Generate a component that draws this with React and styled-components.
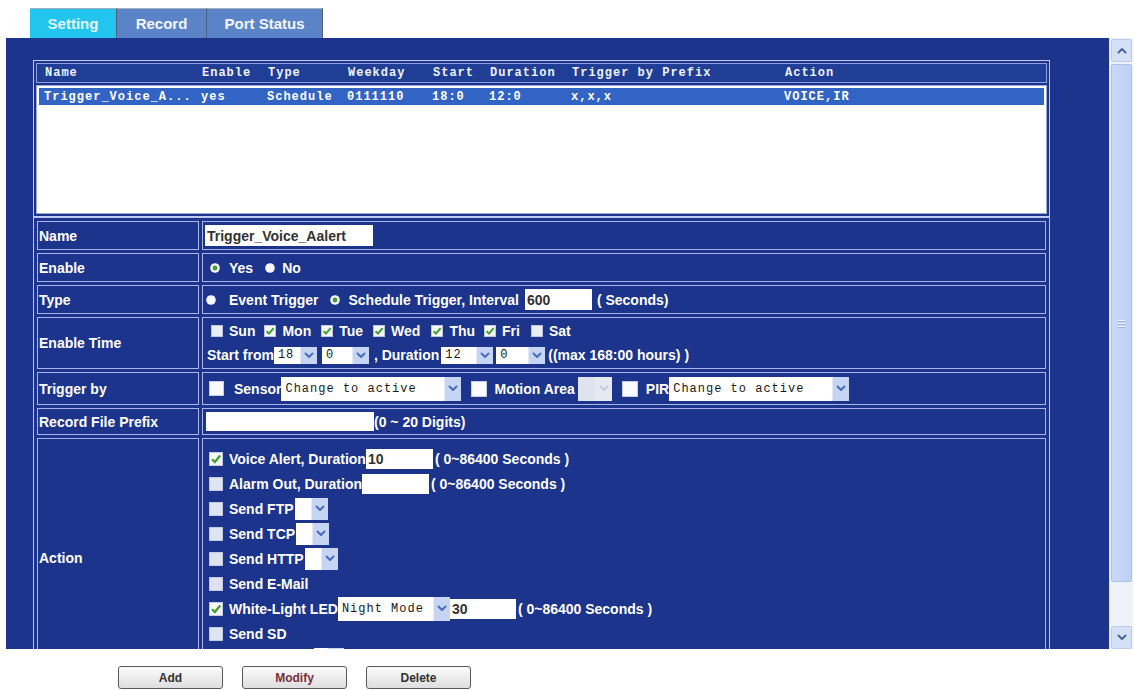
import React from "react";
import styled, { createGlobalStyle } from "styled-components";

const GlobalStyle = createGlobalStyle`
  html, body {
    margin: 0;
    padding: 0;
    background: #ffffff;
  }
  body {
    font-family: "Liberation Sans", Arial, sans-serif;
  }
`;

const Page = styled.div`
  width: 1134px;
  height: 690px;
  overflow: hidden;
  background: #ffffff;
`;

const TabBar = styled.div`
  display: flex;
  height: 30px;
  padding: 8px 0 0 30px;
`;

const Tab = styled.div`
  box-sizing: border-box;
  width: ${(p) => p.$w}px;
  display: flex;
  align-items: center;
  justify-content: center;
  background: ${(p) => (p.$active ? "#22c5ee" : "#5b84c8")};
  color: ${(p) => (p.$active ? "#e2f6ff" : "#f2f6ff")};
  font: bold 15px "Liberation Sans", Arial, sans-serif;
  border-top: 1px solid #a4aebe;
  border-right: 1px solid #4f5f7c;
`;

const Frame = styled.div`
  display: flex;
  margin-left: 6px;
  width: 1127px;
  height: 611px;
`;

const Viewport = styled.div`
  box-sizing: border-box;
  flex: 1;
  background: #1c348c;
  overflow: hidden;
  padding: 22px 0 0 27px;
`;

const Content = styled.div`
  width: 1017px;
`;

/* ---------- rule list ---------- */

const ListFrame = styled.div`
  border: 1px solid #c2ccf2;
  padding: 2px;
`;

const listColumns = "157px 66px 80px 85px 57px 82px 213px 1fr";

const ListHead = styled.div`
  box-sizing: border-box;
  display: grid;
  grid-template-columns: ${listColumns};
  align-items: center;
  height: 20px;
  padding-left: 8px;
  background: #213e96;
  border: 1px solid #8ea0dc;
  font: bold 12px "Liberation Mono", monospace;
  letter-spacing: 1px;
  color: #eef2ff;
  white-space: nowrap;
`;

const ListBox = styled.div`
  box-sizing: border-box;
  margin-top: 2px;
  height: 129px;
  background: #ffffff;
  border: 1px solid #9aaade;
  padding: 2px;
`;

const ListRow = styled.div`
  display: grid;
  grid-template-columns: ${listColumns};
  align-items: center;
  height: 17px;
  padding-left: 5px;
  background: ${(p) => (p.$selected ? "#3264c6" : "transparent")};
  color: ${(p) => (p.$selected ? "#ffffff" : "#222222")};
  font: bold 12px "Liberation Mono", monospace;
  letter-spacing: 1px;
  white-space: nowrap;
`;

/* ---------- form table ---------- */

const FormTable = styled.table`
  width: 1017px;
  margin-top: 0;
  border: 1px solid #b8c4f0;
  border-collapse: separate;
  border-spacing: 3px;
`;

const LabelCell = styled.td`
  box-sizing: border-box;
  width: 162px;
  height: ${(p) => p.$h}px;
  padding: 0 0 0 1px;
  border: 1px solid #aab6e8;
  color: #ffffff;
  font: bold 14px "Liberation Sans", Arial, sans-serif;
  vertical-align: middle;
`;

const ValueCell = styled.td`
  box-sizing: border-box;
  height: ${(p) => p.$h}px;
  padding: ${(p) => (p.$top ? "7px 0 0 1px" : "0 0 0 1px")};
  border: 1px solid #aab6e8;
  color: #ffffff;
  font: bold 14px "Liberation Sans", Arial, sans-serif;
  vertical-align: ${(p) => (p.$top ? "top" : "middle")};
`;

const Line = styled.div`
  display: flex;
  align-items: center;
  height: ${(p) => p.$h || 17}px;
  margin-top: ${(p) => p.$mt || 0}px;
  white-space: nowrap;
`;

const Text = styled.span`
  margin-left: ${(p) => p.$ml || 0}px;
  flex-shrink: 0;
`;

const TextInput = styled.input`
  box-sizing: border-box;
  width: ${(p) => p.$w}px;
  height: ${(p) => p.$h || 20}px;
  margin-left: ${(p) => p.$ml || 0}px;
  padding: 0 2px;
  border: none;
  background: #ffffff;
  color: #333333;
  font: bold 14px "Liberation Sans", Arial, sans-serif;
  flex-shrink: 0;
  outline: none;
`;

const SelectBox = styled.div`
  box-sizing: border-box;
  display: flex;
  width: ${(p) => p.$w}px;
  height: ${(p) => p.$h || 17}px;
  margin-left: ${(p) => p.$ml || 0}px;
  background: ${(p) => (p.$disabled ? "#dfe3ee" : "#ffffff")};
  flex-shrink: 0;
`;

const SelectText = styled.span`
  flex: 1;
  display: flex;
  align-items: center;
  padding-left: 4px;
  overflow: hidden;
  color: #1a1a1a;
  font: 12px "Liberation Mono", monospace;
  letter-spacing: 1px;
  white-space: nowrap;
`;

const SelectArrow = styled.span`
  width: 16px;
  display: flex;
  align-items: center;
  justify-content: center;
  background: ${(p) => (p.$disabled ? "#e6e9f1" : "#c5d5f3")};
  border-left: 1px solid #e4eaf8;
`;

const Chevron = ({ dir = "down", color = "#4a6cc0" }) => (
  <svg width="10" height="7" viewBox="0 0 10 7">
    <path
      d={dir === "down" ? "M1.5 1.5 L5 5 L8.5 1.5" : "M1.5 5.5 L5 2 L8.5 5.5"}
      fill="none"
      stroke={color}
      strokeWidth="2"
      strokeLinecap="round"
      strokeLinejoin="round"
    />
  </svg>
);

const Select = ({ w, h, ml, value = "", disabled }) => (
  <SelectBox $w={w} $h={h} $ml={ml} $disabled={disabled}>
    <SelectText>{value}</SelectText>
    <SelectArrow $disabled={disabled}>
      <Chevron color={disabled ? "#c4cbe0" : "#4a6cc0"} />
    </SelectArrow>
  </SelectBox>
);

const Box = styled.svg`
  flex-shrink: 0;
  width: ${(p) => p.$size}px;
  height: ${(p) => p.$size}px;
  margin-left: ${(p) => p.$ml || 0}px;
`;

const Check = ({ on, size = 12, ml, tone = "#e9edf5" }) => (
  <Box $size={size} $ml={ml} viewBox="0 0 12 12">
    <rect x="0.4" y="0.4" width="11.2" height="11.2" fill={on ? "#f6f8fb" : tone} stroke="#c6cee0" strokeWidth="0.8" />
    {on && (
      <path d="M2.6 6.2 L5 8.6 L9.6 3.1" fill="none" stroke="#3f9f2f" strokeWidth="2" />
    )}
  </Box>
);

const Radio = ({ on, ml }) => (
  <Box $size={10} $ml={ml} viewBox="0 0 10 10">
    <circle cx="5" cy="5" r="4.8" fill="#f4f6fb" />
    {on && <circle cx="5" cy="5" r="2.4" fill="#3fa03a" />}
  </Box>
);

/* ---------- scrollbar ---------- */

const ScrollBar = styled.div`
  box-sizing: border-box;
  width: 24px;
  display: flex;
  flex-direction: column;
  background: #eef2f9;
  border-left: 1px solid #dde4f2;
  padding: 0 1px;
`;

const ScrollButton = styled.div`
  height: 21px;
  margin-top: ${(p) => p.$mt || 0}px;
  display: flex;
  align-items: center;
  justify-content: center;
  background: #d4e0f6;
  border: 1px solid #bccbec;
  border-radius: 2px;
`;

const Thumb = styled.div`
  height: 516px;
  margin-top: 2px;
  display: flex;
  flex-direction: column;
  align-items: center;
  justify-content: center;
  gap: 2px;
  background: linear-gradient(90deg, #cad9f8, #bdd0f5);
  border: 1px solid #aec1ea;
  border-radius: 2px;
`;

const Grip = styled.span`
  width: 7px;
  height: 1px;
  background: #eef3fd;
  box-shadow: 0 1px 0 #9fb3e0;
`;

const Track = styled.div`
  flex: 1;
`;

/* ---------- buttons ---------- */

const ButtonRow = styled.div`
  display: flex;
  gap: 19px;
  padding: 17px 0 0 118px;
`;

const Button = styled.button`
  box-sizing: border-box;
  width: 105px;
  height: 23px;
  padding: 0;
  border: 1px solid #5a5a5a;
  border-radius: 3px;
  background: linear-gradient(#fbfbfb, #dedede);
  color: ${(p) => (p.$accent ? "#7b2d3c" : "#333333")};
  font: bold 12px "Liberation Sans", Arial, sans-serif;
`;

const days = [
  { name: "Sun", on: false, ml: 7 },
  { name: "Mon", on: true, ml: 9 },
  { name: "Tue", on: true, ml: 10 },
  { name: "Wed", on: true, ml: 10 },
  { name: "Thu", on: true, ml: 11 },
  { name: "Fri", on: true, ml: 9 },
  { name: "Sat", on: false, ml: 11 },
];

const actions = [
  { label: "Voice Alert, Duration", on: true, input: { w: 67, value: "10" }, hint: true },
  { label: "Alarm Out, Duration", on: false, input: { w: 67, value: "" }, hint: true },
  { label: "Send FTP", select: { w: 33, h: 22, ml: 1 } },
  { label: "Send TCP", select: { w: 33, h: 22, ml: 1 } },
  { label: "Send HTTP", select: { w: 33, h: 22, ml: 1 } },
  { label: "Send E-Mail" },
  {
    label: "White-Light LED",
    on: true,
    select: { w: 112, h: 24, ml: 0, value: "Night Mode" },
    input: { w: 66, value: "30" },
    hint: true,
  },
  { label: "Send SD" },
  { label: "Send Samba", select: { w: 30, h: 22, ml: 1 } },
];

const App = () => (
  <Page>
    <GlobalStyle />
    <TabBar>
      <Tab $w={87} $active>
        Setting
      </Tab>
      <Tab $w={90}>Record</Tab>
      <Tab $w={116}>Port Status</Tab>
    </TabBar>

    <Frame>
      <Viewport>
        <Content>
          <ListFrame>
            <ListHead>
              <span>Name</span>
              <span>Enable</span>
              <span>Type</span>
              <span>Weekday</span>
              <span>Start</span>
              <span>Duration</span>
              <span>Trigger by Prefix</span>
              <span>Action</span>
            </ListHead>
            <ListBox>
              <ListRow $selected>
                <span>Trigger_Voice_A...</span>
                <span>yes</span>
                <span>Schedule</span>
                <span>0111110</span>
                <span>18:0</span>
                <span>12:0</span>
                <span>x,x,x</span>
                <span>VOICE,IR</span>
              </ListRow>
            </ListBox>
          </ListFrame>

          <FormTable>
            <tbody>
              <tr>
                <LabelCell $h={29}>Name</LabelCell>
                <ValueCell $h={29}>
                  <Line $h={21}>
                    <TextInput $w={168} $h={21} $ml={1} readOnly value="Trigger_Voice_Aalert" />
                  </Line>
                </ValueCell>
              </tr>
              <tr>
                <LabelCell $h={29}>Enable</LabelCell>
                <ValueCell $h={29}>
                  <Line>
                    <Radio on ml={6} />
                    <Text $ml={9}>Yes</Text>
                    <Radio ml={12} />
                    <Text $ml={7}>No</Text>
                  </Line>
                </ValueCell>
              </tr>
              <tr>
                <LabelCell $h={29}>Type</LabelCell>
                <ValueCell $h={29}>
                  <Line $h={21}>
                    <Radio ml={2} />
                    <Text $ml={13}>Event Trigger</Text>
                    <Radio on ml={12} />
                    <Text $ml={8}>Schedule Trigger, Interval</Text>
                    <TextInput $w={67} $h={21} $ml={6} readOnly value="600" />
                    <Text $ml={5}>( Seconds)</Text>
                  </Line>
                </ValueCell>
              </tr>
              <tr>
                <LabelCell $h={52}>Enable Time</LabelCell>
                <ValueCell $h={52}>
                  <Line>
                    {days.map((d) => (
                      <React.Fragment key={d.name}>
                        <Check on={d.on} ml={d.ml} />
                        <Text $ml={6}>{d.name}</Text>
                      </React.Fragment>
                    ))}
                  </Line>
                  <Line $mt={7}>
                    <Text $ml={3}>Start from</Text>
                    <Select w={43} ml={0} value="18" />
                    <Select w={47} ml={5} value="0" />
                    <Text $ml={5}>, Duration</Text>
                    <Select w={52} ml={2} value="12" />
                    <Select w={49} ml={3} value="0" />
                    <Text $ml={3}>((max 168:00 hours) )</Text>
                  </Line>
                </ValueCell>
              </tr>
              <tr>
                <LabelCell $h={33}>Trigger by</LabelCell>
                <ValueCell $h={33}>
                  <Line $h={24}>
                    <Check size={15} ml={5} tone="#fbfbfd" />
                    <Text $ml={10}>Sensor</Text>
                    <Select w={180} h={24} value="Change to active" />
                    <Check size={16} ml={10} tone="#fbfbfd" />
                    <Text $ml={7}>Motion Area</Text>
                    <Select w={34} h={24} ml={3} disabled />
                    <Check size={16} ml={10} tone="#fbfbfd" />
                    <Text $ml={8}>PIR</Text>
                    <Select w={180} h={24} value="Change to active" />
                  </Line>
                </ValueCell>
              </tr>
              <tr>
                <LabelCell $h={27}>Record File Prefix</LabelCell>
                <ValueCell $h={27}>
                  <Line $h={19}>
                    <TextInput $w={168} $h={19} $ml={2} readOnly value="" />
                    <Text>(0 ~ 20 Digits)</Text>
                  </Line>
                </ValueCell>
              </tr>
              <tr>
                <LabelCell $h={240}>Action</LabelCell>
                <ValueCell $h={240} $top>
                  {actions.map((a) => (
                    <Line key={a.label} $h={25}>
                      <Check on={a.on} size={14} ml={5} tone="#dfe3ee" />
                      <Text $ml={6}>{a.label}</Text>
                      {a.select && (
                        <Select w={a.select.w} h={a.select.h} ml={a.select.ml} value={a.select.value} />
                      )}
                      {a.input && (
                        <TextInput $w={a.input.w} $h={20} readOnly value={a.input.value} />
                      )}
                      {a.hint && <Text $ml={2}>( 0~86400 Seconds )</Text>}
                    </Line>
                  ))}
                </ValueCell>
              </tr>
            </tbody>
          </FormTable>
        </Content>
      </Viewport>

      <ScrollBar>
        <ScrollButton $mt={1}>
          <Chevron dir="up" color="#4d6496" />
        </ScrollButton>
        <Thumb>
          <Grip />
          <Grip />
          <Grip />
        </Thumb>
        <Track />
        <ScrollButton>
          <Chevron color="#4d6496" />
        </ScrollButton>
      </ScrollBar>
    </Frame>

    <ButtonRow>
      <Button>Add</Button>
      <Button $accent>Modify</Button>
      <Button>Delete</Button>
    </ButtonRow>
  </Page>
);

export default App;
